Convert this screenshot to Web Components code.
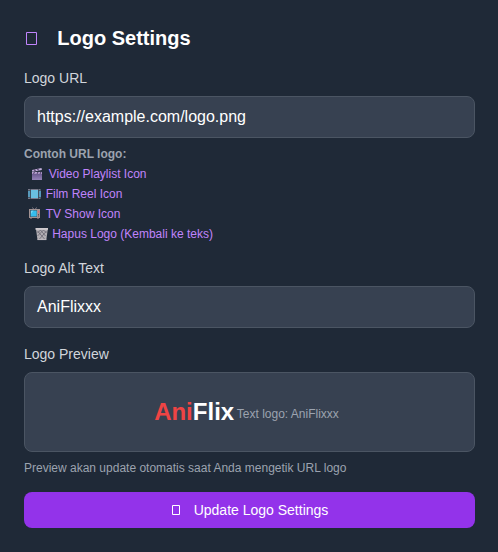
<!DOCTYPE html>
<html lang="id">
<head>
<meta charset="utf-8">
<title>Logo Settings</title>
<style>
body{margin:0;background:#1f2937;font-family:"Liberation Sans",Arial,sans-serif;color:#fff}
</style>
</head>
<body>
<logo-settings></logo-settings>
<script>
const define=(name,html)=>customElements.define(name,class extends HTMLElement{
  constructor(){super();this.attachShadow({mode:'open'}).innerHTML=html;}
});

define('panel-title',`<style>
:host{display:flex;align-items:center;height:28px;font-size:20px;line-height:28px;font-weight:700;color:#fff}
svg{width:12px;height:13px;margin:1px 19.3px 0 2px;flex:none;color:#c084fc}
</style><svg viewBox="0 0 12 13" fill="none" stroke="currentColor"><path d="M.5.5h10v12H.5z"/></svg><span><slot></slot></span>`);

define('field-label',`<style>
:host{display:block;height:20px;line-height:20px;font-size:14px;color:#d1d5db;margin-bottom:8px}
</style><slot></slot>`);

define('text-field',`<style>
:host{display:flex;align-items:center;box-sizing:border-box;height:42px;padding:0 12px;border:1px solid #4b5563;border-radius:8px;background:#374151;font-size:16px;line-height:24px}
</style><span><slot></slot></span>`);

define('example-link',`<style>
:host{display:flex;align-items:center;height:20px;font-size:12px;line-height:20px;color:#c084fc}
::slotted(svg){width:14px;height:14px;margin-right:3.7px;flex:none}
</style><slot name="icon"></slot><span><slot></slot></span>`);

define('logo-preview',`<style>
:host{display:flex;align-items:center;justify-content:center;box-sizing:border-box;height:80px;border:1px solid #4b5563;border-radius:8px;background:#374151}
.row{display:flex;align-items:center;gap:2.7px;white-space:nowrap;padding-right:6px}
.brand{font-size:24px;line-height:32px;font-weight:700}
.red{color:#ef4444}
.note{font-size:12px;line-height:16px;color:#9ca3af;padding-top:3px}
</style><div class="row"><span class="brand"><span class="red">Ani</span>Flix</span><span class="note"><slot></slot></span></div>`);

define('submit-button',`<style>
:host{display:flex;align-items:center;justify-content:center;height:36px;border-radius:8px;background:#9333ea;font-size:14px;line-height:20px;cursor:pointer}
svg{width:9px;height:11px;margin-right:13px;padding-left:1px;flex:none}
</style><svg viewBox="0 0 9 11" fill="none" stroke="#fff"><path d="M.5.5h7v9h-7z"/></svg><span><slot></slot></span>`);

define('logo-settings',`<style>
:host{display:block;box-sizing:border-box;width:498px;height:552px;padding:24px 23px 24px 24px;background:#1f2937}
panel-title{margin-bottom:16px}
.examples{padding-top:6px;margin-bottom:14px}
.caption{height:20px;line-height:20px;font-size:12px;font-weight:700;color:#9ca3af}
.alt{margin-bottom:16px}
.hint{height:16px;line-height:16px;font-size:12px;color:#9ca3af;margin:8px 0 16px}
</style>
<panel-title>Logo Settings</panel-title>
<field-label>Logo URL</field-label>
<text-field>https://example.com/logo.png</text-field>
<div class="examples">
<div class="caption">Contoh URL logo:</div>
<example-link style="padding-left:7px"><svg slot="icon" viewBox="0 0 14 14"><defs><linearGradient id="a" x2="0" y2="1"><stop stop-color="#65548a"/><stop offset="1" stop-color="#9683b8"/></linearGradient></defs><path d="M1 6h10v7H1z" fill="url(#a)"/><path d="M1 2.9 10.5 1l.4 1.9L1.3 4.8z" fill="#c5b1dd"/><path d="m3 2.5 1.6 1.6M6.2 1.9l1.7 1.5" stroke="#54426c" stroke-width="1.2"/><path d="M1 4.9h10v1.9H1z" fill="#baa5d3"/><path d="m3.5 5-1 1.8M7 5 6 6.8M10 5 9 6.8" stroke="#54426c" stroke-width="1.1"/></svg>Video Playlist Icon</example-link>
<example-link style="padding-left:4px"><svg slot="icon" viewBox="0 0 14 14"><path d="M0 2h13v10H0z" fill="#4b5965"/><path d="M3 3h7v8H3z" fill="#69bfe0"/><path d="M0 4h2.3v6H0zM10.7 4H13v6h-2.3z" fill="#5799bb"/><path d="M.5 2.5h12M.5 11.5h12" stroke="#a99bb0" stroke-dasharray="1 1"/><path d="M2.5 2v10M10.5 2v10" stroke="#3d4b5b" stroke-width=".8"/></svg>Film Reel Icon</example-link>
<example-link style="padding-left:4px"><svg slot="icon" viewBox="0 0 14 14"><path d="M4 .5 6.5 2.5 9 .5" fill="none" stroke="#8b8590" stroke-width=".8"/><path d="M1 2h11v9H1z" fill="#a29292"/><path d="M2 3h7v7H2z" fill="#46515d"/><path d="M2.7 3.5h6v6h-6z" fill="#36bded"/><path d="m3 4 2.5-.4L3 7z" fill="#77d6f4"/><path d="M10 4h1.2v1.5H10z" fill="#e46772"/><path d="M10 7.5h1M10 9h1" stroke="#594e57"/><path d="M2 11.5h2M9 11.5h2" stroke="#6c5c63"/></svg>TV Show Icon</example-link>
<example-link style="padding-left:10.5px"><svg slot="icon" viewBox=".5 0 14 14"><path d="M1.5 2h11.8L11.8 13H3z" fill="#b3afb4"/><path d="m3 4 7 8M6 3l5 6M9 3l3 3M12 4l-7 8M9 3l-6 6M6 3 3 6" stroke="#5e5c68" stroke-width=".7"/><path d="M1 1h12.5v1.8H1z" fill="#cfcace"/><path d="M3 12.6h8.8" stroke="#c0bbc2" stroke-width=".8"/></svg>Hapus Logo (Kembali ke teks)</example-link>
</div>
<field-label>Logo Alt Text</field-label>
<text-field class="alt">AniFlixxx</text-field>
<field-label>Logo Preview</field-label>
<logo-preview>Text logo: AniFlixxx</logo-preview>
<div class="hint">Preview akan update otomatis saat Anda mengetik URL logo</div>
<submit-button>Update Logo Settings</submit-button>`);
</script>
</body>
</html>
